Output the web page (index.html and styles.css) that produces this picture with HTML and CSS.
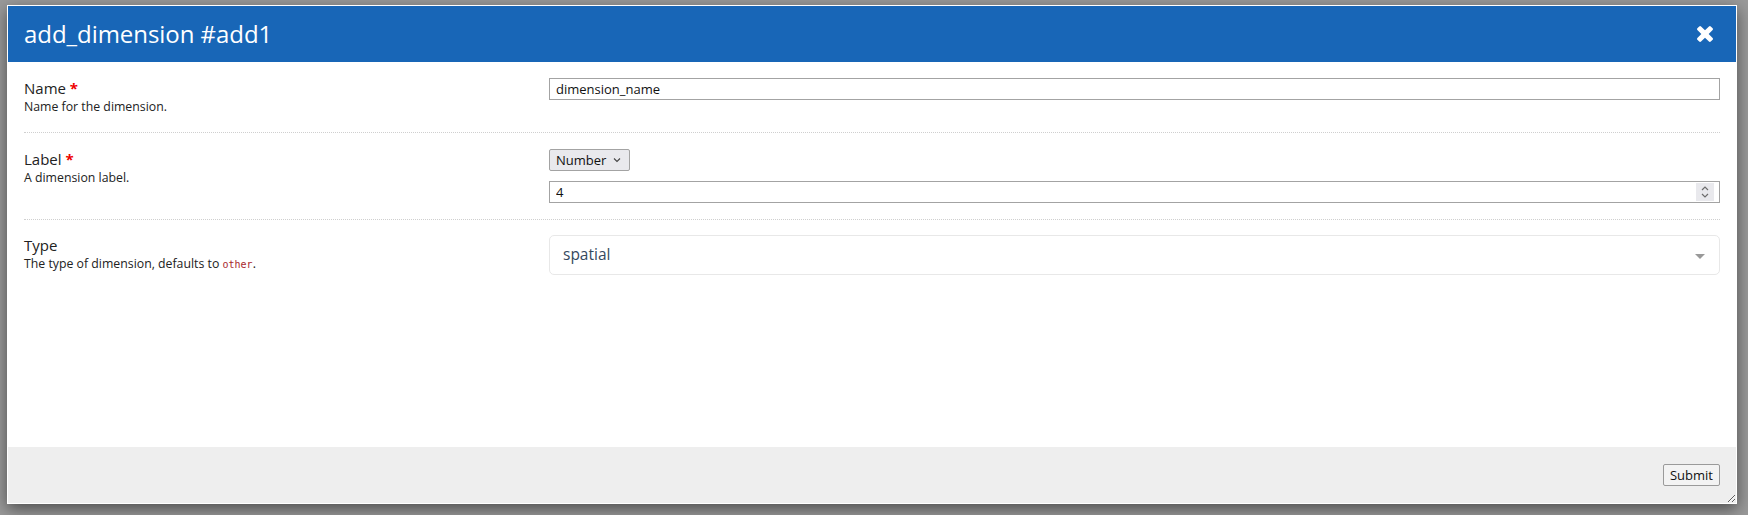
FILE: index.html
```html
<!DOCTYPE html>
<html lang="en">
<head>
<meta charset="utf-8">
<title>add_dimension #add1</title>
<link rel="stylesheet" href="styles.css">
</head>
<body>
<div class="backdrop">
  <div class="modal">
    <div class="modal-header">
      <h1 class="modal-title">add_dimension #add1</h1>
      <button class="close-btn" type="button" aria-label="Close">
        <svg class="close-icon" viewBox="302 366 1188 1188" width="16" height="16"><path fill="#fff" d="M1490 1322q0 40-28 68l-136 136q-28 28-68 28t-68-28l-294-294-294 294q-28 28-68 28t-68-28l-136-136q-28-28-28-68t28-68l294-294-294-294q-28-28-28-68t28-68l136-136q28-28 68-28t68 28l294 294 294-294q28-28 68-28t68 28l136 136q28 28 28 68t-28 68l-294 294 294 294q28 28 28 68z"/></svg>
      </button>
    </div>
    <div class="modal-body">
      <div class="field-row">
        <div class="field-info">
          <div class="field-label">Name <span class="req">*</span></div>
          <div class="field-desc">Name for the dimension.</div>
        </div>
        <div class="field-control">
          <input class="text-input" type="text" value="dimension_name">
        </div>
      </div>
      <div class="field-row">
        <div class="field-info">
          <div class="field-label">Label <span class="req">*</span></div>
          <div class="field-desc">A dimension label.</div>
        </div>
        <div class="field-control stack">
          <div class="select-box">
            <select class="type-select">
              <option>Number</option>
            </select>
            <svg class="select-chev" viewBox="0 0 8 6" width="8" height="6"><path d="M1 1.5 L4 4.5 L7 1.5" fill="none" stroke="#444" stroke-width="1.1"/></svg>
          </div>
          <div class="num-input">
            <input class="num-field" type="text" value="4">
            <span class="spinner">
              <svg viewBox="0 0 18 18" width="18" height="18"><path d="M6 7 L9 4 L12 7" fill="none" stroke="#6d6d6d" stroke-width="1.2"/><path d="M6 11 L9 14 L12 11" fill="none" stroke="#6d6d6d" stroke-width="1.2"/></svg>
            </span>
          </div>
        </div>
      </div>
      <div class="field-row last">
        <div class="field-info">
          <div class="field-label">Type</div>
          <div class="field-desc">The type of dimension, defaults to <code class="code">other</code>.</div>
        </div>
        <div class="field-control">
          <div class="multiselect">
            <span class="ms-single">spatial</span>
            <span class="ms-arrow"></span>
          </div>
        </div>
      </div>
    </div>
    <div class="modal-footer">
      <button class="submit-btn" type="button">Submit</button>
    </div>
  </div>
</div>
</body>
</html>
```

FILE: styles.css
```css
html, body {
  margin: 0;
  padding: 0;
}

body {
  background: #9a9a9a;
  font-family: "Open Sans", "Noto Sans", sans-serif;
  color: #222;
  width: 1748px;
  height: 515px;
  overflow: hidden;
}

.backdrop {
  padding: 5px 0 0 7px;
}

.modal {
  width: 1730px;
  height: 499px;
  box-sizing: border-box;
  border: 1px solid #fff;
  background: #fff;
  display: flex;
  flex-direction: column;
  box-shadow: 0 5px 15px rgba(0, 0, 0, 0.5);
  resize: both;
  overflow: hidden;
}

.modal-header {
  height: 56px;
  flex: none;
  background: #1866b7;
  display: flex;
  align-items: center;
  justify-content: space-between;
  padding: 0 23px 0 16px;
}

.modal-title {
  margin: 0;
  color: #fff;
  font-size: 24px;
  font-weight: 400;
  line-height: 30px;
  letter-spacing: -0.05px;
}

.close-btn {
  border: 0;
  background: none;
  padding: 0;
  width: 16px;
  height: 16px;
  display: flex;
}

.modal-body {
  flex: 1;
  padding: 0 16px;
}

.field-row {
  display: grid;
  grid-template-columns: 525px 1fr;
  padding: 16px 0;
  border-bottom: 1px dotted #cfcfcf;
}

.field-row.last {
  border-bottom: 0;
  padding-top: 15px;
}

.field-label {
  font-size: 15px;
  line-height: 20px;
  color: #222;
}

.req {
  color: #e00;
  font-weight: 700;
}

.field-desc {
  font-size: 12.3px;
  line-height: 18px;
  color: #222;
}

.code {
  font-family: "DejaVu Sans Mono", monospace;
  font-size: 10px;
  color: #a8282d;
}

.field-control {
  display: flex;
}

.field-control.stack {
  flex-direction: column;
  align-items: flex-start;
  gap: 10px;
}

.text-input {
  flex: 1;
  height: 22px;
  box-sizing: border-box;
  border: 1px solid #a3a3a3;
  border-radius: 0;
  padding: 0 6px;
  font-family: "Open Sans", sans-serif;
  font-size: 13px;
  color: #111;
  background: #fff;
  outline: none;
}

.select-box {
  width: 81px;
  height: 22px;
  box-sizing: border-box;
  border: 1px solid #a3a3a3;
  border-radius: 2px;
  background: #e9e9ed;
  display: flex;
  align-items: center;
  padding-right: 8px;
}

.type-select {
  flex: 1;
  min-width: 0;
  appearance: none;
  -webkit-appearance: none;
  border: 0;
  background: transparent;
  padding: 0 0 0 6px;
  height: 20px;
  font-family: "Open Sans", sans-serif;
  font-size: 13px;
  color: #111;
  outline: none;
}

.select-chev {
  flex: none;
}

.num-input {
  align-self: stretch;
  height: 22px;
  box-sizing: border-box;
  border: 1px solid #a3a3a3;
  display: flex;
  align-items: center;
  background: #fff;
}

.num-field {
  flex: 1;
  border: 0;
  outline: none;
  padding: 0 6px;
  font-family: "Open Sans", sans-serif;
  font-size: 13px;
  color: #111;
  background: transparent;
}

.spinner {
  width: 18px;
  height: 18px;
  margin-right: 5px;
  background: #e9e9ed;
  display: flex;
}

.multiselect {
  flex: 1;
  height: 40px;
  box-sizing: border-box;
  border: 1px solid #e8e8e8;
  border-radius: 5px;
  display: flex;
  align-items: center;
  padding: 0 14px 0 13px;
  background: #fff;
}

.ms-single {
  flex: 1;
  font-size: 15.5px;
  line-height: 20px;
  color: #35495e;
  margin-top: -2px;
}

.ms-arrow {
  width: 0;
  height: 0;
  margin-top: 2px;
  border-left: 5px solid transparent;
  border-right: 5px solid transparent;
  border-top: 5px solid #999;
}

.modal-footer {
  height: 56px;
  flex: none;
  background: #eee;
  display: flex;
  align-items: center;
  justify-content: flex-end;
  padding: 0 16px;
}

.submit-btn {
  width: 57px;
  height: 22px;
  box-sizing: border-box;
  border: 1px solid #9a9a9a;
  border-radius: 2px;
  background: #f3f3f3;
  font-family: "Open Sans", sans-serif;
  font-size: 13px;
  color: #111;
  padding: 0;
}
```
